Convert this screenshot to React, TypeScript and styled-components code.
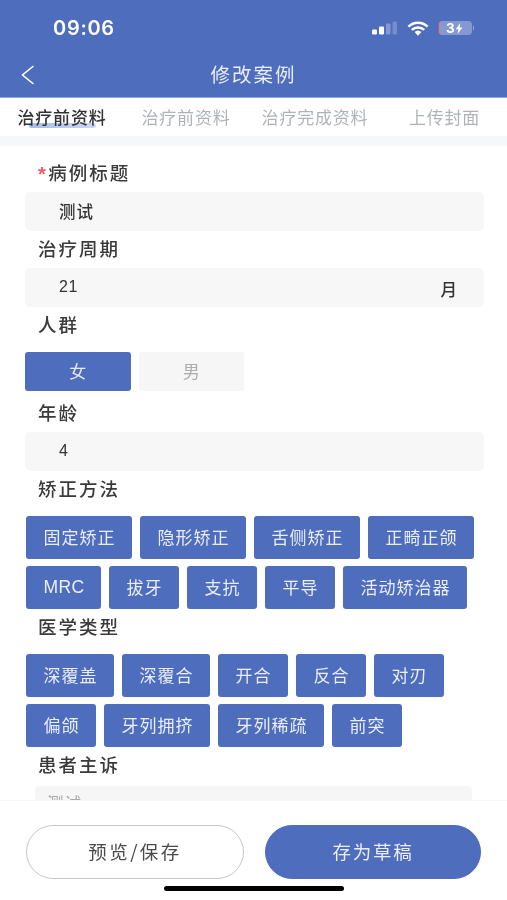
import React from "react";
import styled, { createGlobalStyle } from "styled-components";

const Global = createGlobalStyle`
  html, body { margin: 0; padding: 0; background: #fff; }
  * { box-sizing: border-box; }
  body { font-family: "Noto Sans CJK SC", "Noto Sans", sans-serif; }
`;

const BLUE = "#4f6dbd";

const Page = styled.div`
  width: 507px;
  height: 900px;
  display: flex;
  flex-direction: column;
  overflow: hidden;
  background: #fff;
  filter: blur(0.45px);
`;

const Header = styled.header`
  height: 98px;
  flex: none;
  background: ${BLUE};
  border-bottom: 1px solid #8fa9e4;
  color: #fff;
  display: flex;
  flex-direction: column;
`;

const StatusBar = styled.div`
  height: 56px;
  padding: 0 35px 0 53px;
  display: flex;
  align-items: center;
  justify-content: space-between;
`;

const Clock = styled.span`
  font-family: Inter, "Liberation Sans", sans-serif;
  font-size: 20px;
  font-weight: 600;
  letter-spacing: 0.7px;
`;

const StatusIcons = styled.div`
  display: flex;
  align-items: center;
  gap: 9px;
`;

const Battery = styled.div`
  position: relative;
  width: 34px;
  height: 14px;
  border-radius: 4px;
  background: rgba(255, 255, 255, 0.3);
  border-left: 1.5px solid #d9505f;
  font-family: Inter, "Liberation Sans", sans-serif;
  font-size: 13.5px;
  font-weight: 700;
  line-height: 14px;
  padding-left: 7px;
  display: flex;
  align-items: center;
  &::after {
    content: "";
    position: absolute;
    right: -2px;
    top: 5px;
    width: 1.5px;
    height: 4px;
    background: rgba(255, 255, 255, 0.4);
  }
`;

const NavBar = styled.div`
  flex: 1;
  position: relative;
  display: flex;
  align-items: center;
  justify-content: center;
  padding-bottom: 6px;
`;

const BackButton = styled.span`
  position: absolute;
  left: 20px;
  top: 8px;
  display: flex;
`;

const Title = styled.h1`
  margin: 0;
  font-size: 19.5px;
  font-weight: 400;
  letter-spacing: 2px;
  color: #e9eefa;
`;

const Tabs = styled.nav`
  height: 38px;
  flex: none;
  display: grid;
  grid-template-columns: 124px 124px 134px 1fr;
  align-items: center;
  padding-bottom: 1px;
`;

const Tab = styled.span<{ $active?: boolean }>`
  position: relative;
  justify-self: center;
  font-size: 17px;
  line-height: 22px;
  letter-spacing: 0.8px;
  white-space: nowrap;
  color: ${(p) => (p.$active ? "#333" : "#b0b3b6")};
  font-weight: ${(p) => (p.$active ? 500 : 400)};
  z-index: 0;
  &::after {
    content: ${(p) => (p.$active ? '""' : "none")};
    position: absolute;
    z-index: -1;
    left: 11px;
    right: 11px;
    bottom: 0;
    height: 5px;
    border-radius: 3px;
    background: linear-gradient(90deg, #a9bbe8, #cdd8f3);
  }
`;

const Band = styled.div`
  height: 10px;
  flex: none;
  background: #f6f7f8;
`;

const Form = styled.main`
  flex: 1;
  min-height: 0;
  overflow: hidden;
  padding: 8.5px 23px 0 25px;
`;

const Label = styled.div`
  height: 37.5px;
  padding: 0 0 2.5px 13px;
  display: flex;
  align-items: center;
  font-size: 18.5px;
  font-weight: 500;
  letter-spacing: 2px;
  color: #3a3a3a;
  white-space: nowrap;
`;

const Star = styled.span`
  font-family: "Liberation Sans", sans-serif;
  font-weight: 700;
  color: #f2596b;
  letter-spacing: 0;
  font-size: 20px;
  line-height: 20px;
  margin: 3px 2.5px 0 0;
`;

const Field = styled.div`
  height: 38.5px;
  padding: 0 27px 0 34px;
  display: flex;
  align-items: center;
  justify-content: space-between;
  border-radius: 5px;
  background: #f7f7f7;
  font-size: 16.5px;
  font-weight: 500;
  color: #333;
  letter-spacing: 1px;
`;

const Plain = styled.span`
  font-family: "Liberation Sans", sans-serif;
  font-weight: 400;
  letter-spacing: 0.6px;
  font-size: 16px;
`;

const Unit = styled.span`
  margin-top: 4px;
  letter-spacing: 0;
`;

const GenderRow = styled.div`
  display: flex;
  gap: 8px;
  margin: 8px 0 3.5px;
`;

const Gender = styled.div<{ $active?: boolean }>`
  width: 105.5px;
  height: 39px;
  padding-bottom: 2px;
  border-radius: 3px;
  display: flex;
  align-items: center;
  justify-content: center;
  font-size: 17px;
  color: ${(p) => (p.$active ? "#e6ecfa" : "#adadad")};
  background: ${(p) => (p.$active ? BLUE : "#f6f6f6")};
`;

const ChipGroup = styled.div`
  display: flex;
  flex-wrap: wrap;
  gap: 7.5px 8px;
  margin: 8px 0 0 1px;
`;

const Chip = styled.div`
  height: 42.5px;
  padding: 0 16.5px 2px 17.5px;
  border-radius: 3px;
  display: flex;
  align-items: center;
  background: ${BLUE};
  color: #e9eefa;
  font-size: 17px;
  letter-spacing: 1px;
  white-space: nowrap;
`;

const Latin = styled.span`
  font-family: "Liberation Sans", sans-serif;
  font-size: 17.5px;
  letter-spacing: 0.4px;
  margin-top: 3px;
`;

const TextArea = styled.div`
  margin: 1.5px 12px 0 10px;
  height: 60px;
  padding: 5px 12px;
  background: #f6f6f6;
  border-radius: 4px;
  font-size: 16.5px;
  letter-spacing: 1px;
  color: #aaa;
`;

const Footer = styled.footer`
  height: 100px;
  flex: none;
  position: relative;
  background: #fff;
  border-top: 1px solid #f8f8f8;
  display: flex;
  gap: 21px;
  padding: 24px 26px 0;
`;

const FooterButton = styled.button<{ $primary?: boolean }>`
  width: ${(p) => (p.$primary ? "216px" : "218px")};
  height: 54px;
  border-radius: 27px;
  border: 1px solid ${(p) => (p.$primary ? BLUE : "#c6c6c6")};
  background: ${(p) => (p.$primary ? BLUE : "#fff")};
  color: ${(p) => (p.$primary ? "#e9eefa" : "#4a4a4a")};
  font-family: inherit;
  font-size: 18.5px;
  letter-spacing: ${(p) => (p.$primary ? "1.8px" : "2.4px")};
  padding: 0 0 3px;
`;

const HomeIndicator = styled.div`
  position: absolute;
  left: 164px;
  bottom: 9px;
  width: 180px;
  height: 5px;
  border-radius: 3px;
  background: #000;
`;

const methods1 = ["固定矫正", "隐形矫正", "舌侧矫正", "正畸正颌"];
const methods2 = ["拔牙", "支抗", "平导", "活动矫治器"];
const types = ["深覆盖", "深覆合", "开合", "反合", "对刃", "偏颌", "牙列拥挤", "牙列稀疏", "前突"];

export default function App() {
  return (
    <Page>
      <Global />
      <Header>
        <StatusBar>
          <Clock>09:06</Clock>
          <StatusIcons>
            <svg width="26" height="14" viewBox="0 0 26 14">
              <rect x="0" y="8.5" width="5" height="5" rx="1.2" fill="#fff" />
              <rect x="7" y="5.5" width="5" height="8" rx="1.2" fill="#fff" />
              <rect x="14" y="2.5" width="4.5" height="11" rx="1.2" fill="#fff" fillOpacity=".3" />
              <rect x="20.5" y="0.5" width="4.5" height="13" rx="1.2" fill="#fff" fillOpacity=".22" />
            </svg>
            <svg width="22" height="15" viewBox="0 0 22 15">
              <path d="M1.4 5.6a13.8 13.8 0 0 1 19.2 0M4.8 8.9a9 9 0 0 1 12.4 0" fill="none" stroke="#fff" strokeWidth="2.5" />
              <path d="M7.6 11a5 5 0 0 1 6.8 0L11 14.8z" fill="#fff" />
            </svg>
            <Battery>
              3
              <svg width="8" height="11" viewBox="0 0 8 11">
                <path d="M5.2 0 .8 6.2h2.6L2.6 11 7.4 4.6H4.6z" fill="#fff" />
              </svg>
            </Battery>
          </StatusIcons>
        </StatusBar>
        <NavBar>
          <BackButton>
            <svg width="16" height="22" viewBox="0 0 16 22">
              <path d="M13.5 2 2.5 11l11 9" fill="none" stroke="#fff" strokeWidth="1.6" />
            </svg>
          </BackButton>
          <Title>修改案例</Title>
        </NavBar>
      </Header>
      <Tabs>
        <Tab $active>治疗前资料</Tab>
        <Tab>治疗前资料</Tab>
        <Tab>治疗完成资料</Tab>
        <Tab>上传封面</Tab>
      </Tabs>
      <Band />
      <Form>
        <Label><Star>*</Star>病例标题</Label>
        <Field>测试</Field>
        <Label>治疗周期</Label>
        <Field><Plain>21</Plain><Unit>月</Unit></Field>
        <Label>人群</Label>
        <GenderRow>
          <Gender $active>女</Gender>
          <Gender>男</Gender>
        </GenderRow>
        <Label>年龄</Label>
        <Field><Plain>4</Plain></Field>
        <Label>矫正方法</Label>
        <ChipGroup>
          {methods1.map((m) => <Chip key={m}>{m}</Chip>)}
          <Chip><Latin>MRC</Latin></Chip>
          {methods2.map((m) => <Chip key={m}>{m}</Chip>)}
        </ChipGroup>
        <Label>医学类型</Label>
        <ChipGroup>
          {types.map((m) => <Chip key={m}>{m}</Chip>)}
        </ChipGroup>
        <Label>患者主诉</Label>
        <TextArea>测试</TextArea>
      </Form>
      <Footer>
        <FooterButton>预览/保存</FooterButton>
        <FooterButton $primary>存为草稿</FooterButton>
        <HomeIndicator />
      </Footer>
    </Page>
  );
}
